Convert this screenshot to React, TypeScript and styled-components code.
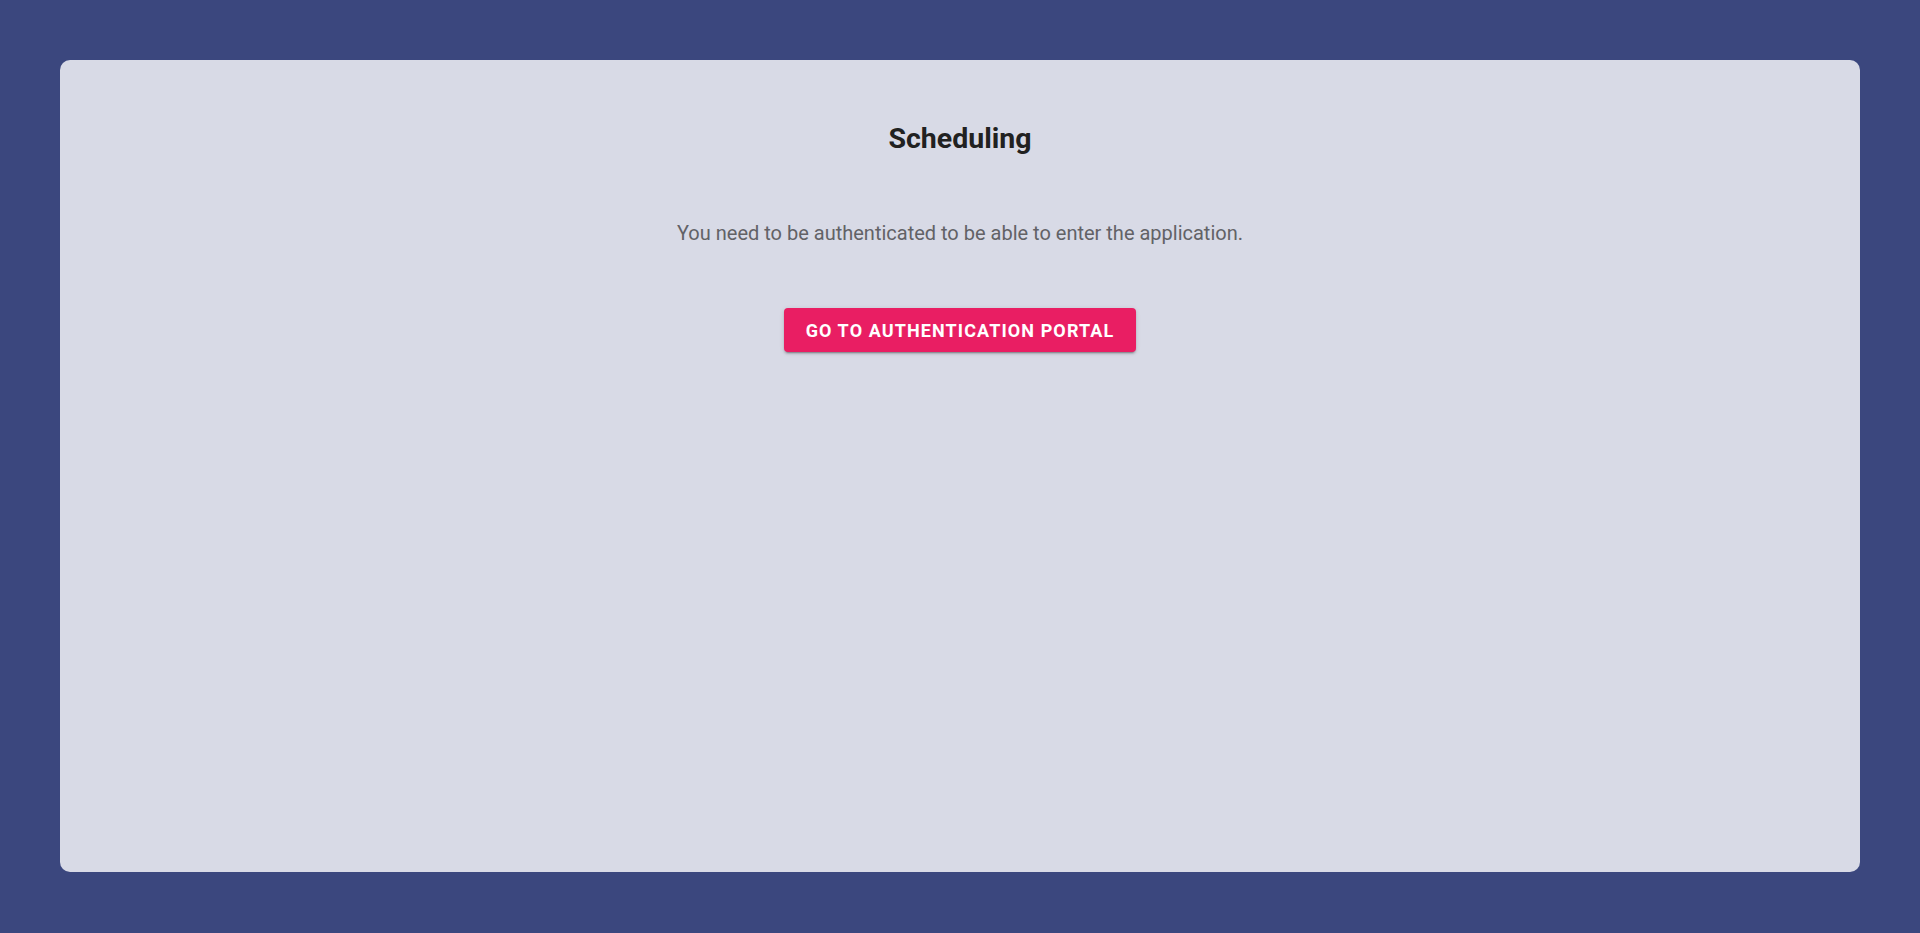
import React from "react";
import styled, { createGlobalStyle } from "styled-components";

const Global = createGlobalStyle`
  html, body { margin: 0; padding: 0; height: 100%; }
  body { background: #3b477e; font-family: Roboto, "Liberation Sans", sans-serif; }
  #root { min-height: 100%; }
`;

const Page = styled.div`
  box-sizing: border-box;
  height: 933px;
  padding: 60px 60px 61px;
  display: flex;
`;

const Card = styled.main`
  flex: 1;
  background: #d8dae6;
  border-radius: 10px;
  display: flex;
  flex-direction: column;
  align-items: center;
  padding-top: 61px;
`;

const Title = styled.h1`
  margin: 0;
  font-size: 28.5px;
  line-height: 36px;
  font-weight: 700;
  color: #212121;
`;

const Message = styled.p`
  margin: 62px 0 0;
  font-size: 20px;
  line-height: 28px;
  color: #626266;
`;

const PortalButton = styled.button`
  margin-top: 61px;
  width: 352px;
  height: 44px;
  border: none;
  border-radius: 4px;
  background: #e91e63;
  color: #fff;
  font-family: Roboto, "Liberation Sans", sans-serif;
  font-size: 18px;
  font-weight: 700;
  letter-spacing: 1.1px;
  text-transform: uppercase;
  box-shadow: 0 3px 1px -2px rgba(0,0,0,0.2), 0 2px 2px 0 rgba(0,0,0,0.14), 0 1px 5px 0 rgba(0,0,0,0.12);
  cursor: pointer;
`;

export default function App() {
  return (
    <>
      <Global />
      <Page>
        <Card>
          <Title>Scheduling</Title>
          <Message>You need to be authenticated to be able to enter the application.</Message>
          <PortalButton>Go to authentication portal</PortalButton>
        </Card>
      </Page>
    </>
  );
}
